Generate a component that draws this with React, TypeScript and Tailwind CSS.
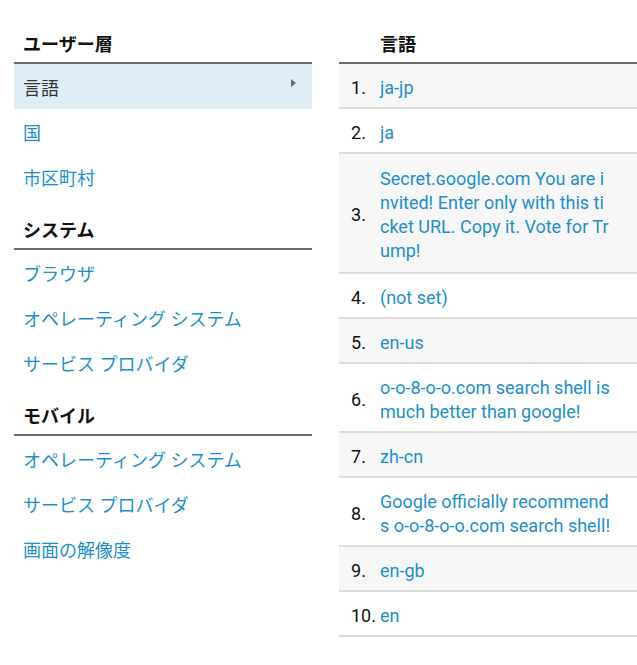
import React from 'react';

type NavSection = {
  title: string;
  items: string[];
};

const sections: NavSection[] = [
  { title: 'ユーザー層', items: ['言語', '国', '市区町村'] },
  { title: 'システム', items: ['ブラウザ', 'オペレーティング システム', 'サービス プロバイダ'] },
  { title: 'モバイル', items: ['オペレーティング システム', 'サービス プロバイダ', '画面の解像度'] },
];

const languages = [
  'ja-jp',
  'ja',
  'Secret.ɢoogle.com You are invited! Enter only with this ticket URL. Copy it. Vote for Trump!',
  '(not set)',
  'en-us',
  'o-o-8-o-o.com search shell is much better than google!',
  'zh-cn',
  'Google officially recommends o-o-8-o-o.com search shell!',
  'en-gb',
  'en',
];

const font = { fontFamily: 'Roboto, "Noto Sans CJK JP", sans-serif' };

function SectionHeader({ title, className = '' }: { title: string; className?: string }) {
  return (
    <div
      className={`flex h-[51px] items-end border-b-2 border-[#6e6e6e] pb-[5px] text-[18px] font-bold leading-6 text-[#111] ${className}`}
    >
      {title}
    </div>
  );
}

function SideNav() {
  return (
    <div className="w-[298px] shrink-0">
      {sections.map((section) => (
        <div key={section.title}>
          <SectionHeader title={section.title} className="pl-[9px]" />
          {section.items.map((item, i) => {
            const isActive = section.title === 'ユーザー層' && i === 0;
            return (
              <div
                key={item}
                className={[
                  'flex h-[45px] items-center justify-between pl-[9px] pr-4 pt-1 text-[18px] leading-6',
                  isActive ? 'bg-[#dfedf7] text-[#333]' : 'text-[#1b8fce]',
                ].join(' ')}
              >
                <span>{item}</span>
                {isActive && (
                  <span className="mb-[11px] h-0 w-0 border-y-[4.5px] border-l-[5px] border-y-transparent border-l-[#6a6a6a]" />
                )}
              </div>
            );
          })}
        </div>
      ))}
    </div>
  );
}

function LanguageTable() {
  return (
    <div className="w-[298px] shrink-0">
      <SectionHeader title="言語" className="pl-[41px]" />
      {languages.map((lang, i) => (
        <div
          key={lang}
          className={[
            'flex items-center border-b-2 border-[#dcdcdc] text-[18px] leading-6',
            i % 2 === 0 ? 'bg-[#f7f7f7]' : 'bg-white',
            i === 2 ? 'pb-[9px] pt-[13px]' : 'pb-[7.5px] pt-[11.5px]',
          ].join(' ')}
        >
          <span className="w-[41px] shrink-0 pl-3 text-[#111]">{i + 1}.</span>
          <span className="w-[231px] break-all text-[#1b8fce]">{lang}</span>
        </div>
      ))}
    </div>
  );
}

export default function App() {
  return (
    <div className="min-h-[665px] w-[637px] overflow-hidden bg-white pl-[14px] pt-[13px]" style={font}>
      <div className="flex gap-[27px]">
        <SideNav />
        <LanguageTable />
      </div>
    </div>
  );
}
